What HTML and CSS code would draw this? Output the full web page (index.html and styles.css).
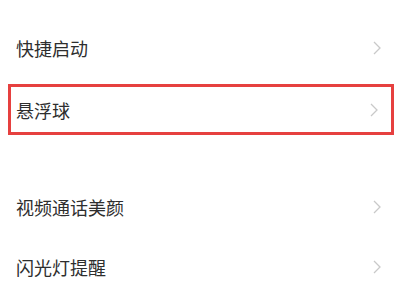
FILE: index.html
```html
<!DOCTYPE html>
<html lang="zh">
<head>
<meta charset="utf-8">
<link rel="stylesheet" href="styles.css">
</head>
<body>
<div class="list">
  <div class="row"><span class="label">智能辅助</span><svg class="chev" viewBox="0 0 8 14"><path d="M1 1 L7 7 L1 13" /></svg></div>
  <div class="row"><span class="label">快捷启动</span><svg class="chev" viewBox="0 0 8 14"><path d="M1 1 L7 7 L1 13" /></svg></div>
  <div class="row hl"><span class="label">悬浮球</span><svg class="chev" viewBox="0 0 8 14"><path d="M1 1 L7 7 L1 13" /></svg></div>
  <div class="gap"></div>
  <div class="row"><span class="label">视频通话美颜</span><svg class="chev" viewBox="0 0 8 14"><path d="M1 1 L7 7 L1 13" /></svg></div>
  <div class="row"><span class="label">闪光灯提醒</span><svg class="chev" viewBox="0 0 8 14"><path d="M1 1 L7 7 L1 13" /></svg></div>
</div>
</body>
</html>
```
FILE: styles.css
```css
html, body {
  margin: 0;
  padding: 0;
  background: #ffffff;
  width: 400px;
  height: 300px;
  overflow: hidden;
}
.list {
  margin-top: -42px;
  font-family: "Noto Sans CJK SC", "Noto Sans", sans-serif;
}
.row {
  height: 60px;
  display: flex;
  align-items: center;
  justify-content: space-between;
  padding: 0 19px 0 16px;
  box-sizing: border-box;
}
.label {
  font-size: 18px;
  color: #2e2e2e;
  line-height: 1;
}
.chev {
  width: 8px;
  height: 14px;
  fill: none;
  stroke: #c9c9c9;
  stroke-width: 1.3;
}
.hl {
  height: 51px;
  margin: 6px 6px 0 8px;
  border: 3px solid #e6403f;
  padding: 0 13px 0 5px;
}
.gap {
  height: 42px;
}
```
